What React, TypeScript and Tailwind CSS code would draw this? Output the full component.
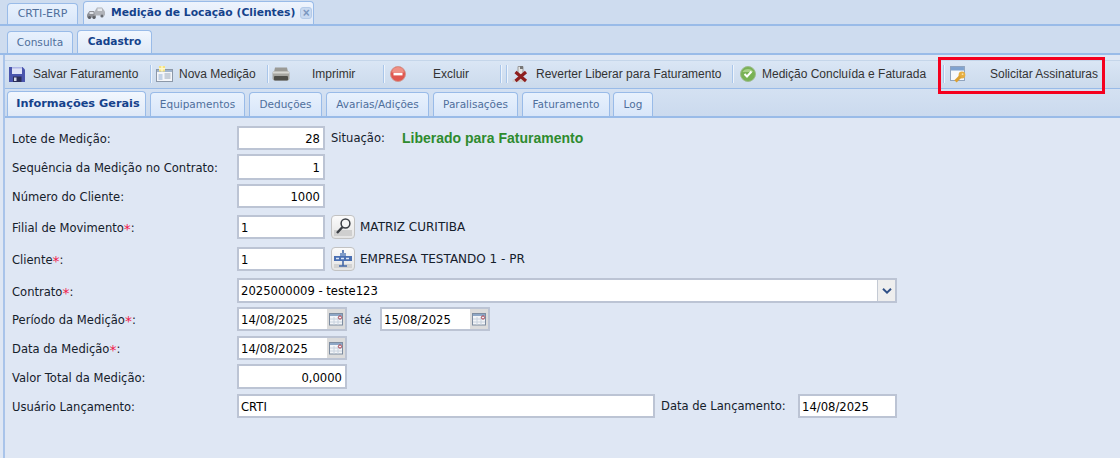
const tahoma = "font-['DejaVu_Sans',sans-serif]";

function SaveIcon() {
  return (
    <svg width="16" height="16" viewBox="0 0 16 16">
      <path d="M0 1 H13.5 L16 3.5 V16 H0 Z" fill="#4a55ad" />
      <rect x="3" y="1" width="10" height="7" fill="#dfe3f7" />
      <rect x="3" y="1" width="10" height="1.5" fill="#aeb6e6" />
      <rect x="4" y="10.5" width="8.5" height="5.5" fill="#2c2f58" />
      <rect x="5" y="11.5" width="2.5" height="3.5" fill="#d8dcec" />
    </svg>
  );
}

function NewIcon() {
  return (
    <svg width="17" height="16" viewBox="0 0 17 16">
      <rect x="0.5" y="3.5" width="16" height="12" fill="#f4f6fa" stroke="#8c98a8" />
      <rect x="1" y="4" width="15" height="2" fill="#9fb3cc" />
      <path d="M2.5 8h4v6h-4z" fill="#c3d2e6" />
      <path d="M8.5 8h6M8.5 10h6M8.5 12h6" stroke="#9aa8ba" />
      <path d="M3 0h6v5.5H3z" fill="#f5e183" />
      <path d="M6 0v5.5M3 2.7h6" stroke="#fff9cc" strokeWidth="1.4" />
    </svg>
  );
}

function PrintIcon() {
  return (
    <svg width="18" height="14" viewBox="0 0 18 14">
      <path d="M3 0.5 H15 L16 5 H2 Z" fill="#9a9a96" />
      <rect x="0.5" y="4" width="17" height="9.5" rx="2" fill="#a6a6a1" />
      <rect x="1" y="4.5" width="16" height="2" fill="#d8d8d4" />
      <rect x="2" y="9" width="14" height="4.5" rx="1" fill="#4f4f4a" />
    </svg>
  );
}

function DeleteIcon() {
  return (
    <svg width="16" height="16" viewBox="0 0 16 16">
      <circle cx="8" cy="8" r="7.5" fill="#e0574f" stroke="#d09890" />
      <path d="M2 6.5a6 5.5 0 0 1 12 0z" fill="#ee9186" />
      <rect x="3.5" y="6.8" width="9" height="2.6" fill="#ffffff" />
    </svg>
  );
}

function RevertIcon() {
  return (
    <svg width="17" height="17" viewBox="0 0 17 17">
      <path d="M6 0.5 H11 V9 H6 Z" fill="#e4e4e4" stroke="#9a9a9a" />
      <rect x="8" y="0" width="3" height="3" fill="#777777" />
      <rect x="0.5" y="13.5" width="13" height="2.5" fill="#cfcfcf" />
      <path d="M3.5 6 L14 15 M14 6 L3.5 15" stroke="#8e1f1f" strokeWidth="3.2" />
    </svg>
  );
}

function CheckIcon() {
  return (
    <svg width="16" height="16" viewBox="0 0 16 16">
      <circle cx="8" cy="8" r="7.5" fill="#79b255" stroke="#9dbb8f" />
      <path d="M2.5 6a6 5 0 0 1 11 0z" fill="#a7d088" />
      <path d="M4.5 8 L7 10.5 L11.5 5.5" fill="none" stroke="#ffffff" strokeWidth="2" />
    </svg>
  );
}

function SignIcon() {
  return (
    <svg width="16" height="17" viewBox="0 0 16 17">
      <rect x="0.5" y="0.5" width="14" height="14" fill="#f7f9fd" stroke="#8fa3bd" />
      <rect x="1" y="1" width="13" height="3.5" fill="#7fa3d0" />
      <circle cx="12" cy="9" r="3.4" fill="#e6ae42" />
      <path d="M10.5 10.5 L5.5 15.5" stroke="#dca032" strokeWidth="3.2" />
      <circle cx="12.6" cy="8.2" r="0.9" fill="#f8e2a8" />
    </svg>
  );
}

function SearchIcon() {
  return (
    <svg width="20" height="20" viewBox="0 0 20 20">
      <rect x="1" y="13" width="18" height="6" fill="#cfcfcf" />
      <circle cx="12.5" cy="6.5" r="4.4" fill="#f6f6f6" stroke="#3a3e44" strokeWidth="1.5" />
      <path d="M9.5 10 L4 16" stroke="#3a3e44" strokeWidth="2.4" />
    </svg>
  );
}

function ClientIcon() {
  return (
    <svg width="20" height="20" viewBox="0 0 20 20">
      <rect x="1" y="15" width="18" height="4" fill="#d2d2d2" />
      <path d="M10 1v16M6 17h8" stroke="#4468a8" strokeWidth="1.6" />
      <rect x="1" y="7" width="18" height="5" fill="#4a6fb2" />
      <path d="M3 9.5h3M8 9.5h3M13 9.5h3" stroke="#dce6f6" strokeWidth="1.4" />
      <rect x="7" y="4" width="6" height="3" fill="#7f9bc8" />
    </svg>
  );
}

function CalendarIcon() {
  return (
    <svg width="15" height="13" viewBox="0 0 15 13">
      <rect x="0.5" y="0.5" width="13" height="11.5" fill="#f3f5f8" stroke="#7d8ca0" />
      <rect x="1" y="1" width="12" height="2" fill="#8ea7c6" />
      <path d="M1 6h12M1 9h12M5 4v8M9 4v8" stroke="#c8d2de" />
      <circle cx="11" cy="4.5" r="1.6" fill="#f3f5f8" stroke="#a63a4a" />
    </svg>
  );
}

function CarsIcon() {
  return (
    <svg width="18" height="14" viewBox="0 0 18 14">
      <path d="M0 8.5 L2.5 5 H7 L9 8.5 V11.5 H0 Z" fill="#8f9197" />
      <path d="M7.5 5.5 L10 1.5 H15 L18 5.5 V9.5 H7.5 Z" fill="#b0b3b9" />
      <rect x="10.5" y="2.5" width="4.5" height="2.5" fill="#e6e9ee" />
      <rect x="2.5" y="6" width="4" height="2" fill="#dfe2e8" />
      <circle cx="2.5" cy="11.5" r="1.6" fill="#5c5f65" />
      <circle cx="7" cy="11.5" r="1.6" fill="#5c5f65" />
      <circle cx="15" cy="10" r="1.6" fill="#6a6d73" />
    </svg>
  );
}

function Tab({ label, active, className }: { label: string; active?: boolean; className?: string }) {
  return (
    <div
      className={`flex items-center justify-center rounded-t-[4px] border border-b-0 border-[#99bbe8] ${tahoma} ${
        active
          ? "bg-gradient-to-b from-[#f2f7fe] to-[#dfe9f7] font-bold text-[#15428b]"
          : "bg-gradient-to-b from-[#e8f1fd] to-[#d8e6f9] text-[#4f6f9b]"
      } ${className ?? ""}`}
    >
      {label}
    </div>
  );
}

function Sep({ className }: { className?: string }) {
  return <div className={`h-[18px] w-[2px] shrink-0 border-l border-r border-l-[#a9c6ea] border-r-[#eef4fc] ${className ?? "mx-[3px]"}`} />;
}

function ToolButton({ icon, label, className }: { icon: React.ReactNode; label: string; className: string }) {
  return (
    <div className={`flex shrink-0 items-center text-xs text-[#333333] ${className}`}>
      {icon}
      <span className="whitespace-nowrap">{label}</span>
    </div>
  );
}

function Label({ text, required }: { text: string; required?: boolean }) {
  return (
    <div className={`flex h-5 w-[225px] shrink-0 items-center whitespace-nowrap pt-[4px] text-[11.55px] text-[#15202b] ${tahoma}`}>
      {text}
      {required && <span className="text-[14px] leading-none text-[#f0184a]">*</span>}:
    </div>
  );
}

function Field({ value, right, className }: { value: string; right?: boolean; className?: string }) {
  return (
    <div
      className={`flex shrink-0 items-center border-2 border-[#bcc4d4] bg-white pt-[4px] text-[11.6px] text-black ${tahoma} ${
        right ? "justify-end pl-[2px] pr-[3px]" : "px-[2px]"
      } ${className ?? ""}`}
    >
      {value}
    </div>
  );
}

function DateField({ value }: { value: string }) {
  return (
    <div className={`flex h-6 w-[110px] shrink-0 border-2 border-[#bcc4d4] bg-white text-[11.6px] text-black ${tahoma}`}>
      <div className="flex flex-1 items-center px-[2px] pt-[4px]">{value}</div>
      <div className="flex w-[18px] items-center justify-center bg-[#dcdcdc]">
        <CalendarIcon />
      </div>
    </div>
  );
}

function LookupButton({ children }: { children: React.ReactNode }) {
  return (
    <div className="ml-[6px] flex h-6 w-6 shrink-0 items-center justify-center rounded-[4px] border border-[#c2c2c2] bg-gradient-to-b from-[#fbfbfb] to-[#e4e4e4]">
      {children}
    </div>
  );
}

export default function App() {
  return (
    <div className={`relative h-[458px] w-[1120px] overflow-hidden bg-[#dfe7f4] ${tahoma}`}>
      <div className="ml-[3px] flex h-full flex-col border-l-2 border-[#a9c4ea]">
        <div className="-ml-[5px] flex h-[26px] items-end border-b-2 border-[#99bbe8] bg-[#cedcef] pl-[7px]">
          <Tab label="CRTI-ERP" className="h-[21px] w-[71px] text-[11px]" />
          <div className="ml-[5px] flex h-[23px] w-[231px] items-center rounded-t-[4px] border border-b-0 border-[#99bbe8] bg-gradient-to-b from-[#eef4fd] to-[#dfe9f7] pl-[3px] font-bold text-[#15428b]">
            <CarsIcon />
            <span className="ml-[6px] whitespace-nowrap text-[10.75px]">Medição de Locação (Clientes)</span>
            <div className="ml-[5px] flex h-[12px] w-[12px] items-center justify-center rounded-[3px] border border-[#b4cae8] bg-[#c8d9f0] font-['Liberation_Sans',sans-serif] text-[12px] leading-none text-[#7b97bf]">×</div>
          </div>
        </div>
        <div className="-ml-[5px] flex h-[29px] items-end border-b-2 border-[#99bbe8] bg-[#cedcef] pl-[7px]">
          <Tab label="Consulta" className="h-[22px] w-[66px] text-[10.6px]" />
          <Tab label="Cadastro" active className="ml-[4px] h-[23px] w-[75px] text-[10.6px]" />
        </div>
        <div className="mt-[5px] flex h-[28px] items-center border-t border-[#c5d6ea] bg-gradient-to-b from-[#dae6f5] to-[#cbdaec] pb-[1px] pl-[4px] font-['Liberation_Sans',sans-serif]">
          <ToolButton icon={<SaveIcon />} label="Salvar Faturamento" className="w-[138px] gap-[8px]" />
          <Sep />
          <ToolButton icon={<NewIcon />} label="Nova Medição" className="w-[109px] gap-[6px] pl-[1px]" />
          <Sep />
          <ToolButton icon={<PrintIcon />} label="Imprimir" className="w-[108px] gap-[22px]" />
          <Sep />
          <ToolButton icon={<DeleteIcon />} label="Excluir" className="w-[110px] gap-[27px] pl-[2px]" />
          <Sep className="mx-[2px]" />
          <Sep className="ml-[2px] mr-[3px]" />
          <ToolButton icon={<RevertIcon />} label="Reverter Liberar para Faturamento" className="w-[218px] gap-[7px] pl-[1px]" />
          <Sep />
          <ToolButton icon={<CheckIcon />} label="Medição Concluída e Faturada" className="w-[203px] gap-[6px] pl-[3px]" />
          <Sep />
          <ToolButton icon={<SignIcon />} label="Solicitar Assinaturas" className="w-[150px] gap-[24px] pl-[2px]" />
        </div>
        <div className="flex h-[30px] items-end border-y border-y-[#99bbe8] border-b-2 bg-gradient-to-b from-[#d4e1f2] to-[#cbdaee] pl-[2px]">
          <Tab label="Informações Gerais" active className="h-[25px] w-[139px] pl-[3px] text-[11.3px]" />
          <Tab label="Equipamentos" className="ml-[4px] h-[24px] w-[95px] text-[10.5px]" />
          <Tab label="Deduções" className="ml-[4px] h-[24px] w-[73px] text-[10.5px]" />
          <Tab label="Avarias/Adições" className="ml-[4px] h-[24px] w-[103px] text-[10.5px]" />
          <Tab label="Paralisações" className="ml-[4px] h-[24px] w-[85px] text-[10.5px]" />
          <Tab label="Faturamento" className="ml-[4px] h-[24px] w-[88px] text-[10.5px]" />
          <Tab label="Log" className="ml-[3px] h-[24px] w-[40px] text-[10.5px]" />
        </div>

        <div className="flex flex-col pl-[7px] pt-[8px]">
          <div className="flex h-6 items-center">
            <Label text="Lote de Medição" />
            <Field value="28" right className="h-6 w-[88px]" />
            <div className="ml-[6px] w-[49px] pt-[2px] text-[11.55px] text-[#15202b]">Situação:</div>
            <div className="ml-[22px] whitespace-nowrap font-['Liberation_Sans',sans-serif] text-[14px] font-bold text-[#2e8b2e]">Liberado para Faturamento</div>
          </div>
          <div className="mt-[4px] flex h-[26px] items-center">
            <Label text="Sequência da Medição no Contrato" />
            <Field value="1" right className="h-[26px] w-[88px]" />
          </div>
          <div className="mt-[4px] flex h-6 items-center">
            <Label text="Número do Cliente" />
            <Field value="1000" right className="h-6 w-[88px]" />
          </div>
          <div className="mt-[7px] flex h-6 items-center">
            <Label text="Filial de Movimento" required />
            <Field value="1" className="h-6 w-[88px]" />
            <LookupButton><SearchIcon /></LookupButton>
            <div className="ml-[5px] text-xs text-[#15202b]">MATRIZ CURITIBA</div>
          </div>
          <div className="mt-[8px] flex h-6 items-center">
            <Label text="Cliente" required />
            <Field value="1" className="h-6 w-[88px]" />
            <LookupButton><ClientIcon /></LookupButton>
            <div className="ml-[5px] text-xs text-[#15202b]">EMPRESA TESTANDO 1 - PR</div>
          </div>
          <div className="mt-[7px] flex h-[25px] items-center">
            <Label text="Contrato" required />
            <div className="flex h-[25px] w-[660px] shrink-0 border-2 border-[#bcc4d4] bg-white text-[11.6px] text-black">
              <div className="flex flex-1 items-center px-[2px] pt-[2px]">2025000009 - teste123</div>
              <div className="flex w-[18px] items-center justify-center border-l border-[#c4cad4] bg-[#eeeeee]">
                <svg width="10" height="6" viewBox="0 0 10 6">
                  <path d="M1 0.8 L5 4.6 L9 0.8" fill="none" stroke="#2f4f86" strokeWidth="2" />
                </svg>
              </div>
            </div>
          </div>
          <div className="mt-[4px] flex h-6 items-center">
            <Label text="Período da Medição" required />
            <DateField value="14/08/2025" />
            <div className="w-[33px] pl-[6px] pt-[3px] text-[11.55px] text-[#15202b]">até</div>
            <DateField value="15/08/2025" />
          </div>
          <div className="mt-[5px] flex h-6 items-center">
            <Label text="Data da Medição" required />
            <DateField value="14/08/2025" />
          </div>
          <div className="mt-[4px] flex h-[25px] items-center">
            <Label text="Valor Total da Medição" />
            <Field value="0,0000" right className="h-[25px] w-[110px]" />
          </div>
          <div className="mt-[5px] flex h-6 items-center">
            <Label text="Usuário Lançamento" />
            <Field value="CRTI" className="h-6 w-[418px]" />
            <div className="ml-[6px] w-[137px] whitespace-nowrap pt-[2px] text-[11.55px] text-[#15202b]">Data de Lançamento:</div>
            <Field value="14/08/2025" className="h-6 w-[99px]" />
          </div>
        </div>
      </div>
      <div className="absolute left-[938px] top-[57px] h-[37px] w-[167px] border-[3px] border-[#f5001e]" />
    </div>
  );
}
